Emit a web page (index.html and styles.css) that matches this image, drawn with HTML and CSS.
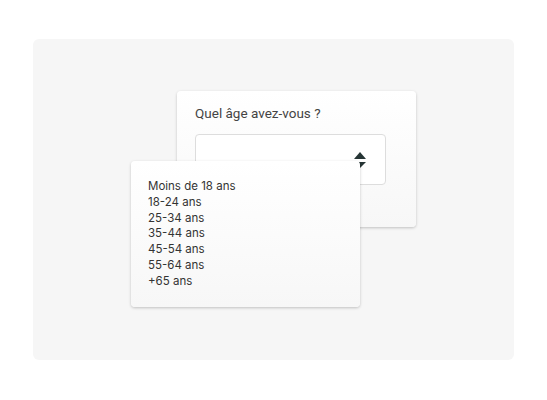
FILE: index.html
```html
<!DOCTYPE html>
<html lang="fr">
<head>
    <meta charset="UTF-8">
    <meta name="viewport" content="width=device-width, initial-scale=1.0">
    <title>Quel âge avez-vous ?</title>
    <link rel="stylesheet" href="styles.css">
</head>
<body>
    <div class="panel">
        <div class="card question">
            <label class="question-label">Quel âge avez-vous ?</label>
            <div class="select">
                <svg class="select-arrows" width="12" height="16" viewBox="0 0 12 16">
                    <path d="M6 0 L12 7 L0 7 Z" fill="#263535"/>
                    <path d="M0 10 L12 10 L6 16 Z" fill="#263535"/>
                </svg>
            </div>
        </div>

        <ul class="card options">
            <li>Moins de 18 ans</li>
            <li>18-24 ans</li>
            <li>25-34 ans</li>
            <li>35-44 ans</li>
            <li>45-54 ans</li>
            <li>55-64 ans</li>
            <li>+65 ans</li>
        </ul>
    </div>
</body>
</html>
```

FILE: styles.css
```css
body { margin: 0; background: #fff; font-family: Inter, "Noto Sans", sans-serif; }

.panel { position: relative; margin: 39px 0 0 33px; width: 481px; height: 321px; padding-top: 52px; box-sizing: border-box; background: #f6f6f6; border-radius: 6px; }

.card { background: linear-gradient(#fff, #f7f7f7); border-radius: 4px; box-shadow: 0 1px 3px rgba(0,0,0,0.22); }

.question { margin-left: 144px; width: 239px; height: 136px; padding: 13px 30px 0 18px; box-sizing: border-box; }
.question-label { display: block; font-family: Roboto, "Noto Sans", sans-serif; font-size: 13.5px; color: #444; line-height: 18px; }
.select { margin-top: 12px; height: 51px; border: 1px solid #ddd; border-radius: 4px; background: #fff; display: flex; align-items: center; justify-content: flex-end; padding-right: 19px; box-sizing: border-box; }
.select-arrows { display: block; margin-top: 1px; }

.options { position: absolute; left: 98px; top: 122px; width: 229px; height: 146px; margin: 0; padding: 18px 0 0 17px; box-sizing: border-box; list-style: none; }
.options li { font-size: 11.5px; line-height: 15.8px; color: #333; }
```
